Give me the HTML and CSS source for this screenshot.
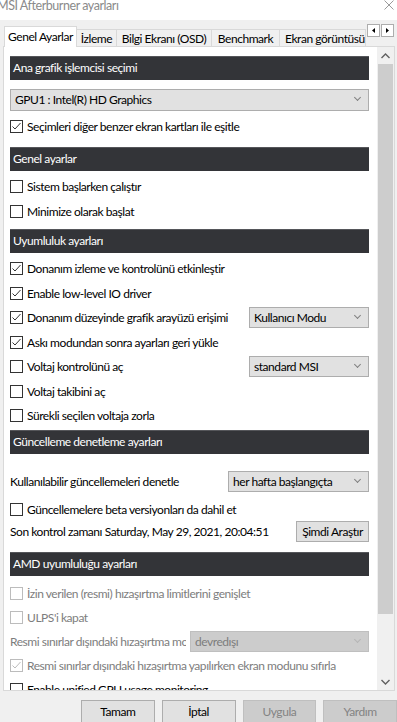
FILE: index.html
```html
<!DOCTYPE html>
<html lang="tr">
<head>
    <meta charset="UTF-8">
    <title>MSI Afterburner ayarları</title>
    <link rel="stylesheet" href="styles.css">
</head>
<body>
    <div class="titlebar">
        <span class="title">MSI Afterburner ayarları</span>
        <svg class="close" width="10" height="10" viewBox="0 0 10 10"><path d="M0.5 0.5 L9.5 9.5 M9.5 0.5 L0.5 9.5" stroke="#9a9a9a" stroke-width="1"/></svg>
    </div>

    <div class="tabs">
        <div class="tab active">Genel Ayarlar</div>
        <div class="tab t-izleme">İzleme</div>
        <div class="tab t-osd">Bilgi Ekranı (OSD)</div>
        <div class="tab t-bench">Benchmark</div>
        <div class="tab t-ekran">Ekran görüntüsü</div>
        <div class="tab-arrows">
            <span class="tab-arrow"><svg width="3" height="5" viewBox="0 0 3 5"><path d="M3 0 L0 2.5 L3 5 Z" fill="#000"/></svg></span>
            <span class="tab-arrow"><svg width="3" height="5" viewBox="0 0 3 5"><path d="M0 0 L3 2.5 L0 5 Z" fill="#000"/></svg></span>
        </div>
    </div>

    <div class="panel">
        <div class="content">
            <div class="section-title first">Ana grafik işlemcisi seçimi</div>
            <div class="select wide">GPU1 : Intel(R) HD Graphics<span class="chev"></span></div>
            <label class="row"><span class="box"><svg width="11" height="11" viewBox="0 0 11 11"><path d="M1.5 5.5 L4 8 L9.5 2" stroke="#333" fill="none"/></svg></span>Seçimleri diğer benzer ekran kartları ile eşitle</label>

            <div class="section-title">Genel ayarlar</div>
            <label class="row"><span class="box"></span>Sistem başlarken çalıştır</label>
            <label class="row"><span class="box"></span>Minimize olarak başlat</label>

            <div class="section-title compat">Uyumluluk ayarları</div>
            <label class="row"><span class="box"><svg width="11" height="11" viewBox="0 0 11 11"><path d="M1.5 5.5 L4 8 L9.5 2" stroke="#333" fill="none"/></svg></span>Donanım izleme ve kontrolünü etkinleştir</label>
            <label class="row"><span class="box"><svg width="11" height="11" viewBox="0 0 11 11"><path d="M1.5 5.5 L4 8 L9.5 2" stroke="#333" fill="none"/></svg></span>Enable low-level IO driver</label>
            <div class="row">
                <label class="cb"><span class="box"><svg width="11" height="11" viewBox="0 0 11 11"><path d="M1.5 5.5 L4 8 L9.5 2" stroke="#333" fill="none"/></svg></span>Donanım düzeyinde grafik arayüzü erişimi</label>
                <div class="select side">Kullanıcı Modu<span class="chev"></span></div>
            </div>
            <label class="row"><span class="box"><svg width="11" height="11" viewBox="0 0 11 11"><path d="M1.5 5.5 L4 8 L9.5 2" stroke="#333" fill="none"/></svg></span>Askı modundan sonra ayarları geri yükle</label>
            <div class="row">
                <label class="cb"><span class="box"></span>Voltaj kontrolünü aç</label>
                <div class="select side">standard MSI<span class="chev"></span></div>
            </div>
            <label class="row"><span class="box"></span>Voltaj takibini aç</label>
            <label class="row"><span class="box"></span>Sürekli seçilen voltaja zorla</label>

            <div class="section-title tight">Güncelleme denetleme ayarları</div>
            <div class="row update-row">
                <span>Kullanılabilir güncellemeleri denetle</span>
                <div class="select update">her hafta başlangıçta<span class="chev"></span></div>
            </div>
            <label class="row"><span class="box"></span>Güncellemelere beta versiyonları da dahil et</label>
            <div class="row last-check">
                <span>Son kontrol zamanı Saturday, May 29, 2021, 20:04:51</span>
                <button class="btn small">Şimdi Araştır</button>
            </div>

            <div class="section-title amd-title">AMD uyumluluğu ayarları</div>
            <div class="amd-group">
                <label class="row disabled"><span class="box"></span>İzin verilen (resmi) hızaşırtma limitlerini genişlet</label>
                <label class="row disabled"><span class="box"></span>ULPS'i kapat</label>
                <div class="row disabled">
                    <span class="cut">Resmi sınırlar dışındaki hızaşırtma modu</span>
                    <div class="select amd">devredışı<span class="chev"></span></div>
                </div>
                <label class="row disabled"><span class="box"><svg width="11" height="11" viewBox="0 0 11 11"><path d="M1.5 5.5 L4 8 L9.5 2" stroke="#bcbcbc" fill="none"/></svg></span>Resmi sınırlar dışındaki hızaşırtma yapılırken ekran modunu sıfırla</label>
                <label class="row"><span class="box"></span>Enable unified GPU usage monitoring</label>
            </div>
        </div>

        <div class="scrollbar">
            <div class="sb-arrow"><svg width="9" height="6" viewBox="0 0 9 6"><path d="M0.5 5 L4.5 1 L8.5 5" stroke="#606060" stroke-width="1.4" fill="none"/></svg></div>
            <div class="sb-track"><div class="sb-thumb"></div></div>
            <div class="sb-arrow"><svg width="9" height="6" viewBox="0 0 9 6"><path d="M0.5 1 L4.5 5 L8.5 1" stroke="#606060" stroke-width="1.4" fill="none"/></svg></div>
        </div>
    </div>

    <div class="buttons">
        <button class="btn">Tamam</button>
        <button class="btn">İptal</button>
        <button class="btn" disabled>Uygula</button>
        <button class="btn" disabled>Yardım</button>
    </div>
</body>
</html>
```

FILE: styles.css
```css
body {
    margin: 0;
    width: 397px;
    height: 722px;
    overflow: hidden;
    background-color: #f0f0f0;
    font-family: 'Lato', 'Liberation Sans', sans-serif;
    font-size: 12px;
    letter-spacing: -0.45px;
    color: #000;
}
.titlebar {
    height: 20px;
    background-color: #fff;
    display: flex;
    justify-content: space-between;
    align-items: flex-start;
}
.title {
    margin-left: -3px;
    margin-top: -2px;
    color: #8a8a8a;
    font-size: 12.5px;
}
.close {
    margin-right: 3px;
}
.tabs {
    height: 26px;
    display: flex;
    align-items: flex-end;
    padding-left: 4px;
}
.tab {
    height: 17px;
    line-height: 17px;
    border: 1px solid #d9d9d9;
    border-bottom: none;
    border-left: none;
    background-color: #f0f0f0;
    white-space: nowrap;
    overflow: hidden;
    text-align: center;
    box-sizing: border-box;
}
.tab.active {
    width: 73px;
    height: 21px;
    line-height: 19px;
    background-color: #fff;
    border-left: 1px solid #d9d9d9;
    margin-bottom: -1px;
    position: relative;
    z-index: 1;
}
.t-izleme { width: 40px; }
.t-osd { width: 95px; }
.t-bench { width: 68px; }
.t-ekran {
    width: 86px;
    text-align: left;
    padding-left: 5px;
}
.tab-arrows {
    display: flex;
    align-self: flex-start;
    margin-top: 4px;
    margin-left: 1px;
}
.tab-arrow {
    width: 11px;
    height: 11px;
    border: 1px solid #adadad;
    background-color: #fff;
    display: flex;
    align-items: center;
    justify-content: center;
    margin-right: 1px;
}
.panel {
    margin-left: 3px;
    margin-right: 2px;
    height: 643px;
    background-color: #fff;
    border: 1px solid #d9d9d9;
    display: flex;
    overflow: hidden;
}
.content {
    width: 359px;
    padding: 9px 0 0 6px;
    flex-shrink: 0;
}
.section-title {
    height: 23px;
    line-height: 22px;
    background-color: #333438;
    border-top: 1px solid #55565a;
    color: #fff;
    padding-left: 3px;
    margin-top: 8px;
    margin-bottom: 4px;
}
.section-title.first {
    margin-top: 0;
    margin-bottom: 9px;
}
.section-title.compat {
    margin-top: 5px;
}
.section-title.tight {
    margin-top: 2px;
}
.section-title.amd-title {
    margin-top: 8px;
    margin-bottom: 6px;
}
.row {
    height: 24.5px;
    display: flex;
    align-items: center;
    white-space: nowrap;
}
.amd-group .row {
    height: 24px;
}
.update-row {
    margin-top: 15px;
    justify-content: space-between;
    margin-bottom: 4px;
}
.last-check {
    margin-top: -3px;
}
.cb {
    display: flex;
    align-items: center;
    flex: 1;
}
.box {
    width: 11px;
    height: 11px;
    border: 1px solid #333;
    background-color: #fff;
    margin-right: 4px;
    flex-shrink: 0;
    display: flex;
}
.disabled {
    color: #7d7d7d;
}
.disabled .box {
    border-color: #bcbcbc;
}
.select {
    box-sizing: border-box;
    height: 21px;
    line-height: 19px;
    border: 1px solid #adadad;
    background-color: #e1e1e1;
    padding-left: 4px;
    position: relative;
}
.select.wide {
    height: 22px;
    line-height: 20px;
    margin-bottom: 3px;
}
.select.side {
    width: 120px;
}
.select.update {
    width: 141px;
}
.select.amd {
    width: 179px;
    margin-left: auto;
    background-color: #cccccc;
    border-color: #bfbfbf;
}
.chev {
    position: absolute;
    right: 8px;
    top: 5px;
    width: 4px;
    height: 4px;
    border: solid #808080;
    border-width: 0 1px 1px 0;
    transform: rotate(45deg);
}
.amd .chev {
    border-color: #b5b5b5;
}
.cut {
    width: 176px;
    overflow: hidden;
}
.btn {
    font-family: inherit;
    font-size: 12px;
    letter-spacing: inherit;
    height: 23px;
    width: 74px;
    border: 1px solid #adadad;
    background-color: #e1e1e1;
    padding: 0;
    color: #000;
}
.btn[disabled] {
    background-color: #cccccc;
    border-color: #bfbfbf;
    color: #838383;
}
.btn.small {
    margin-left: auto;
    width: 73px;
    height: 21px;
}
.scrollbar {
    width: 17px;
    margin-left: 8px;
    background-color: #f0f0f0;
    display: flex;
    flex-direction: column;
}
.sb-arrow {
    height: 17px;
    display: flex;
    align-items: center;
    justify-content: center;
}
.sb-track {
    flex: 1;
}
.sb-thumb {
    margin: 0 1px;
    height: 550px;
    background-color: #cdcdcd;
}
.buttons {
    display: flex;
    gap: 7px;
    padding: 9px 0 0 81px;
}
```
